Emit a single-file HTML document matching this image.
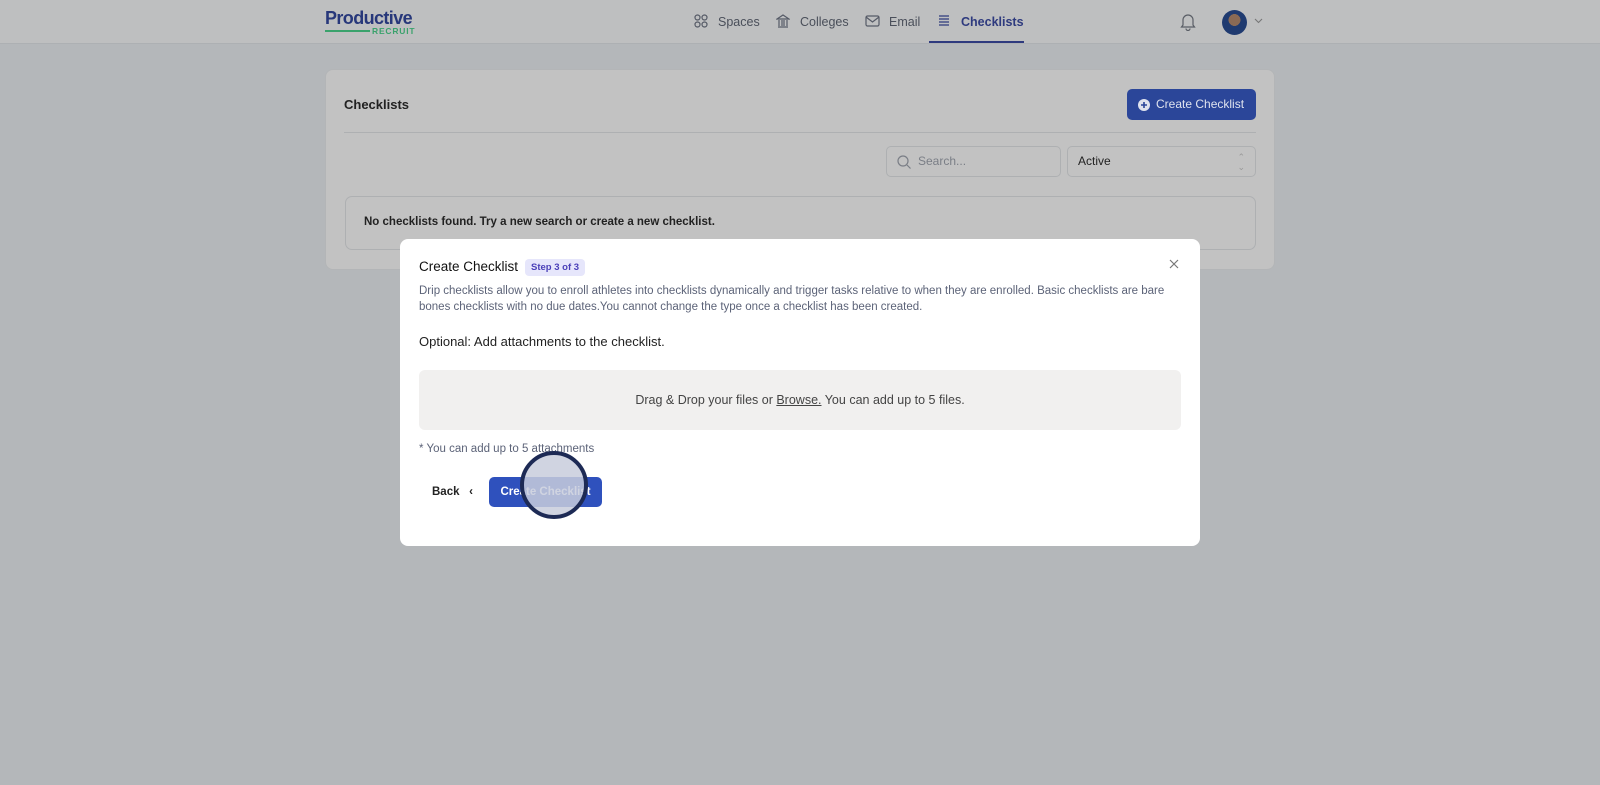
<!DOCTYPE html>
<html><head><style>
*{box-sizing:border-box;margin:0;padding:0}
body{width:1600px;height:785px;background:#b4b7ba;font-family:"Liberation Sans",sans-serif;position:relative;overflow:hidden}
.hdr{position:absolute;left:0;top:0;width:1600px;height:44px;background:#bebfc0;border-bottom:1px solid #adb0b3}
.logo{position:absolute;left:325px;top:8px;font-weight:bold;font-size:18px;color:#27377a;letter-spacing:-0.6px}
.logo2{position:absolute;left:372px;top:26px;font-size:8.5px;font-weight:bold;color:#3aa26c;letter-spacing:0.8px}
.logoline{position:absolute;left:325px;top:30px;width:45px;height:2px;background:#3aa26c}
.nav{position:absolute;top:15px;font-size:12.5px;color:#4a4f5a}
.nav svg{position:absolute;left:-24px;top:-1px}
.ul{position:absolute;left:929px;top:41px;width:95px;height:2px;background:#2e3a7e}
.card{position:absolute;left:325px;top:69px;width:950px;height:201px;background:#c2c2c2;border:1px solid #b3b5b7;border-radius:8px}
.btnc{position:absolute;left:1127px;top:89px;width:129px;height:31px;background:#2b4699;border-radius:5px;color:#dfe3ee;font-size:12px;line-height:31px;padding-left:29px}
.inp{position:absolute;top:146px;height:31px;background:#c2c2c2;border:1px solid #aeb0b2;border-radius:5px;font-size:12px;line-height:29px}
.modal{position:absolute;left:400px;top:239px;width:800px;height:307px;background:#fff;border-radius:8px}
</style></head><body>
<div class="hdr"></div>
<div class="logo">Productive</div><div class="logoline"></div><div class="logo2">RECRUIT</div>
<div class="nav" style="left:718px"><svg width="14" height="14" viewBox="0 0 14 14" fill="none" stroke="#555a66" stroke-width="1.2"><circle cx="3.5" cy="3.5" r="2.5"/><circle cx="10.5" cy="3.5" r="2.5"/><circle cx="3.5" cy="10.5" r="2.5"/><circle cx="10.5" cy="10.5" r="2.5"/></svg>Spaces</div>
<div class="nav" style="left:800px"><svg width="14" height="14" viewBox="0 0 14 14" fill="none" stroke="#555a66" stroke-width="1.2"><path d="M1 5L7 1l6 4H1zM2 13h10M3 6v6M6 6v6M8 6v6M11 6v6"/></svg>Colleges</div>
<div class="nav" style="left:889px"><svg width="15" height="14" viewBox="0 0 15 14" fill="none" stroke="#555a66" stroke-width="1.2"><rect x="1" y="2" width="13" height="10" rx="1.5"/><path d="M1 3l6.5 5 6.5-5"/></svg>Email</div>
<div class="nav" style="left:961px;color:#2e3a7e;font-weight:bold"><svg width="14" height="14" viewBox="0 0 14 14" fill="none" stroke="#2e3a7e" stroke-width="1.2"><path d="M2 2h10M2 5h10M2 8h10M2 11h10"/></svg>Checklists</div>
<div class="ul"></div>
<svg style="position:absolute;left:1180px;top:13px" width="16" height="18" viewBox="0 0 16 18" fill="none" stroke="#5a5e66" stroke-width="1.2"><path d="M3 12V7a5 5 0 0110 0v5l1.5 2h-13zM6 15.5a2 2 0 004 0"/></svg>
<div style="position:absolute;left:1222px;top:10px;width:25px;height:25px;border-radius:50%;background:radial-gradient(circle at 50% 40%,#8a6a55 0 30%,#1f3a70 31%)"></div>
<svg style="position:absolute;left:1254px;top:18px" width="9" height="6" viewBox="0 0 9 6" fill="none" stroke="#777" stroke-width="1.1"><path d="M1 1l3.5 3.5L8 1"/></svg>
<div class="card"></div>
<div style="position:absolute;left:344px;top:97px;font-size:13px;font-weight:bold;color:#222">Checklists</div>
<div style="position:absolute;left:344px;top:132px;width:912px;height:1px;background:#aeb0b2"></div>
<div class="btnc"><svg style="position:absolute;left:11px;top:10px" width="12" height="12" viewBox="0 0 12 12"><circle cx="6" cy="6" r="6" fill="#dfe3ee"/><path d="M6 3v6M3 6h6" stroke="#2b4699" stroke-width="1.6"/></svg>Create Checklist</div>
<div class="inp" style="left:886px;width:175px;padding-left:31px;color:#7a7e86"><svg style="position:absolute;left:10px;top:8px" width="14" height="14" viewBox="0 0 14 14" fill="none" stroke="#7a7e86" stroke-width="1.2"><circle cx="6" cy="6" r="5"/><path d="M10 10l3.5 3.5"/></svg>Search...</div>
<div class="inp" style="left:1067px;width:189px;padding-left:10px;color:#222">Active<span style="position:absolute;right:10px;color:#999;font-size:9px;line-height:10px;top:5px">⌃<br>⌄</span></div>
<div style="position:absolute;left:345px;top:196px;width:911px;height:54px;border:1px solid #aeb0b2;border-radius:7px"></div>
<div style="position:absolute;left:364px;top:216px;font-size:11.5px;font-weight:bold;color:#222">No checklists found. Try a new search or create a new checklist.</div>
<div class="modal">
<div style="position:absolute;left:19px;top:20px;font-size:13.5px;color:#111">Create Checklist</div>
<div style="position:absolute;left:125px;top:20px;height:17px;padding:0 6px;background:#e6e6fb;border-radius:4px;font-size:9.5px;font-weight:bold;color:#4a3fb8;line-height:17px">Step 3 of 3</div>
<div style="position:absolute;left:19px;top:45px;width:775px;font-size:11.5px;line-height:15.5px;color:#5c6378">Drip checklists allow you to enroll athletes into checklists dynamically and trigger tasks relative to when they are enrolled. Basic checklists are bare bones checklists with no due dates.You cannot change the type once a checklist has been created.</div>
<div style="position:absolute;left:19px;top:95px;font-size:13px;color:#222">Optional: Add attachments to the checklist.</div>
<div style="position:absolute;left:19px;top:131px;width:762px;height:60px;background:#f1f0ef;border-radius:6px;text-align:center;line-height:60px;font-size:12.5px;color:#444">Drag &amp; Drop your files or <u>Browse.</u> You can add up to 5 files.</div>
<div style="position:absolute;left:19px;top:204px;font-size:11.5px;color:#5c6378">* You can add up to 5 attachments</div>
<div style="position:absolute;left:32px;top:247px;font-size:11.5px;font-weight:bold;color:#222">Back &nbsp;&nbsp;‹</div>
<div style="position:absolute;left:89px;top:238px;width:113px;height:30px;background:#2f51bd;border-radius:5px;color:#fff;font-size:11.5px;font-weight:bold;line-height:30px;text-align:center">Create Checklist</div>
<div style="position:absolute;left:120px;top:212px;width:68px;height:68px;border-radius:50%;border:4px solid #1d2a55;background:rgba(200,205,220,0.85)"></div>
<svg style="position:absolute;left:769px;top:20px" width="10" height="10" viewBox="0 0 10 10" stroke="#777" stroke-width="1.2"><path d="M1 1l8 8M9 1l-8 8"/></svg>
</div>
</body></html>
